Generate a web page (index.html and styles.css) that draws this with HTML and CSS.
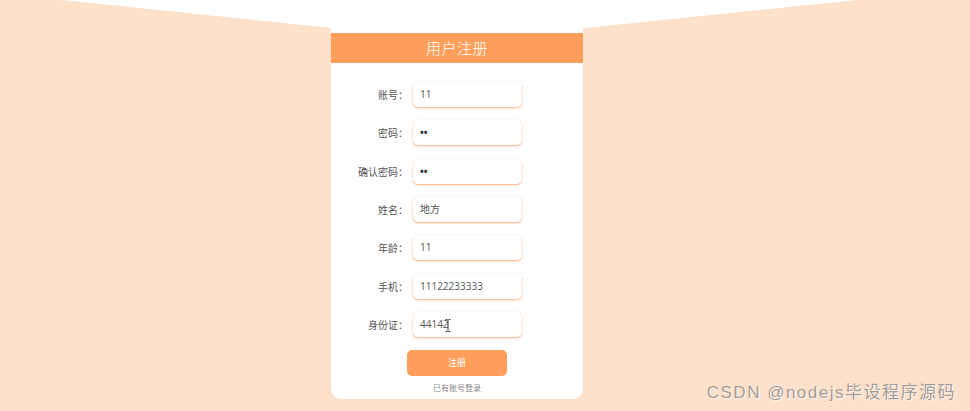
FILE: index.html
```html
<!DOCTYPE html>
<html lang="zh">
<head>
<meta charset="utf-8">
<link rel="stylesheet" href="styles.css">
</head>
<body>
<div class="page">
  <div class="sky"></div>
  <div class="card">
    <div class="title">用户注册</div>
    <form class="form">
      <div class="row"><label>账号：</label><div class="input">11</div></div>
      <div class="row"><label>密码：</label><div class="input dots">••</div></div>
      <div class="row"><label>确认密码：</label><div class="input dots">••</div></div>
      <div class="row"><label>姓名：</label><div class="input">地方</div></div>
      <div class="row"><label>年龄：</label><div class="input">11</div></div>
      <div class="row"><label>手机：</label><div class="input">11122233333</div></div>
      <div class="row"><label>身份证：</label><div class="input">44142<svg class="caret" width="6" height="13" viewBox="0 0 6 13"><path d="M0.5 0.5h2M3.5 0.5h2M3 1v11M0.5 12.5h2M3.5 12.5h2" stroke="#333" stroke-width="1" fill="none"/></svg></div></div>
      <div class="actions">
        <div class="btn">注册</div>
        <div class="login">已有账号登录</div>
      </div>
    </form>
  </div>
  <div class="watermark">CSDN @nodejs毕设程序源码</div>
</div>
</body>
</html>
```
FILE: styles.css
```css
* { box-sizing: border-box; }
html, body { margin: 0; padding: 0; }
body {
  width: 970px;
  height: 411px;
  overflow: hidden;
  background: #fde1cb;
  font-family: "Noto Sans CJK SC", "Noto Sans", sans-serif;
}
.page {
  position: relative;
  width: 970px;
  height: 411px;
  display: flex;
  justify-content: flex-start;
  padding-top: 17px;
  padding-left: 331px;
}
.sky {
  position: absolute;
  left: 0; top: 0;
  width: 970px;
  height: 40px;
  background: #ffffff;
  clip-path: polygon(62px 0, 857px 0, 585px 28px, 332px 28px);
}
.card {
  position: relative;
  width: 252px;
  height: 382px;
  background: #ffffff;
  border-radius: 10px;
  padding-top: 16px;
  display: flex;
  flex-direction: column;
}
.title {
  height: 30px;
  background: #ff9f5b;
  color: #fff;
  font-size: 15px;
  font-weight: 300;
  line-height: 30px;
  text-align: center;
  letter-spacing: 0.5px;
}
.form {
  display: flex;
  flex-direction: column;
  gap: 13px;
  padding-top: 19px;
}
.row {
  display: flex;
  align-items: center;
  height: 25.3px;
}
.row label {
  width: 77px;
  text-align: right;
  font-size: 10px;
  color: #555;
}
.input {
  position: relative;
  margin-left: 5px;
  width: 109px;
  height: 25px;
  border-radius: 5px;
  background: #fff;
  box-shadow: 0 1px 2px 0 rgba(255, 150, 80, 0.75), 0 0 2px rgba(0,0,0,0.06);
  font-size: 10px;
  color: #555;
  line-height: 25px;
  padding-left: 7px;
  font-family: "Open Sans", "Noto Sans CJK SC", sans-serif;
}
.input.dots { font-size: 10px; color: #333; letter-spacing: 0; font-weight: 700; }
.caret {
  position: absolute;
  left: 32px;
  top: 7px;
}
.actions {
  display: flex;
  flex-direction: column;
  align-items: center;
}
.btn {
  width: 100px;
  height: 26px;
  border-radius: 5px;
  background: #ff9f5b;
  color: #fff;
  font-size: 9px;
  line-height: 26px;
  text-align: center;
}
.login {
  margin-top: 6px;
  font-size: 8px;
  color: #888;
}
.watermark {
  position: absolute;
  right: 14px;
  bottom: 8px;
  font-family: "Liberation Sans", "Noto Sans CJK SC", sans-serif;
  font-size: 17px;
  letter-spacing: 1.5px;
  color: #a39d99;
  text-shadow: 1px 1px 1px rgba(255,255,255,0.7);
}
```
